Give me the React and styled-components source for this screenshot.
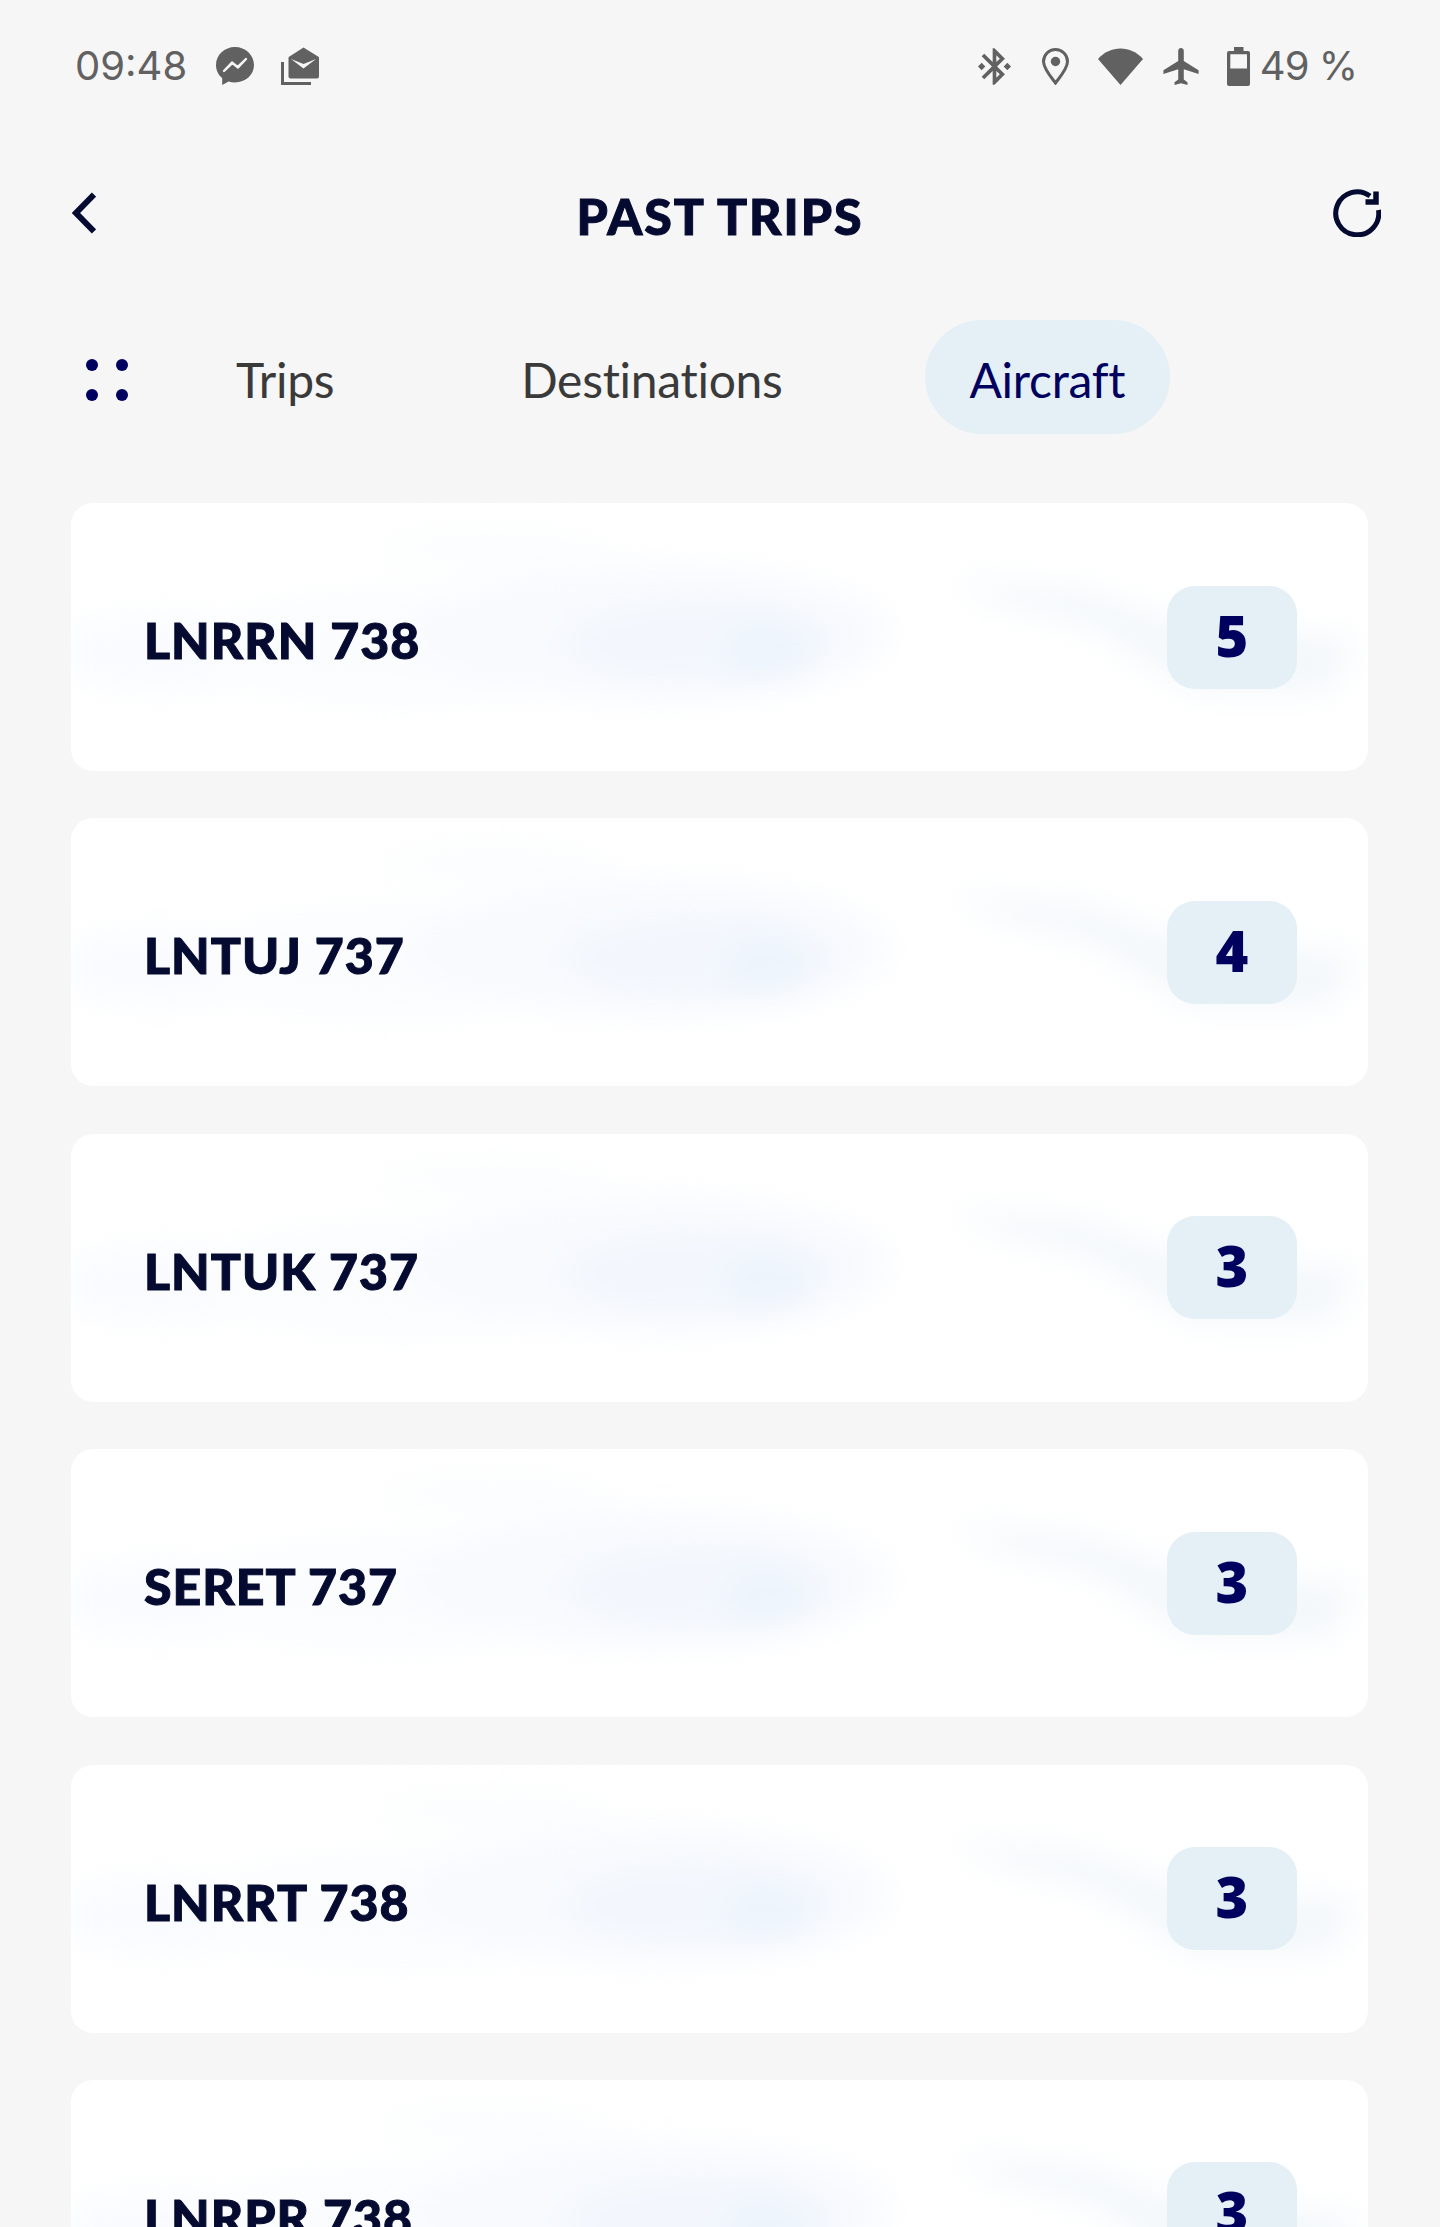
import React from 'react'
import styled, { createGlobalStyle } from 'styled-components'

const GlobalStyle = createGlobalStyle`
  html, body {
    margin: 0;
    padding: 0;
    background: #f6f6f6;
  }
`

const Page = styled.div`
  width: 1440px;
  height: 2227px;
  overflow: hidden;
  background: #f6f6f6;
  font-family: "Noto Sans", sans-serif;
`

const StatusBar = styled.div`
  height: 132px;
  padding: 0 83px 0 75px;
  display: flex;
  align-items: center;
  justify-content: space-between;
  color: #616161;
  box-sizing: border-box;
`

const StatusGroup = styled.div`
  display: flex;
  align-items: center;
`

const StatusText = styled.span`
  font-family: Inter, sans-serif;
  font-size: 40px;
  line-height: 48px;
  font-weight: 400;
  letter-spacing: ${p => p.$spacing || 0}px;
  margin-left: ${p => p.$left || 0}px;
  white-space: pre;
`

const StatusIcon = styled.svg`
  display: block;
  flex: none;
  margin-left: ${p => p.$left || 0}px;
  fill: #616161;
`

const Header = styled.header`
  height: 168px;
  padding: 0 59px 0 72px;
  display: flex;
  align-items: center;
  justify-content: space-between;
  position: relative;
  box-sizing: border-box;
`

const Title = styled.h1`
  position: absolute;
  left: 0;
  right: 0;
  top: 50%;
  transform: translateY(-50%);
  margin: 0;
  text-align: center;
  font-family: Lato, sans-serif;
  font-size: 50px;
  line-height: 60px;
  font-weight: 900;
  letter-spacing: 2px;
  -webkit-text-stroke: 1px #050a30;
  color: #050a30;
`

const HeaderIcon = styled.svg`
  display: block;
  margin-top: -6px;
  fill: none;
  stroke: #050a30;
`

const Tabs = styled.nav`
  margin-top: 20px;
  padding-left: 86px;
  display: flex;
  align-items: center;
  height: 114px;
`

const Dots = styled.div`
  display: grid;
  grid-template-columns: 12px 12px;
  gap: 18px;
  margin: 6px 63px 0 0;
  span {
    width: 12px;
    height: 12px;
    border-radius: 50%;
    background: #00005f;
  }
`

const Tab = styled.div`
  height: 114px;
  box-sizing: border-box;
  padding: 5px 45px 0;
  margin-right: 97px;
  border-radius: 57px;
  display: flex;
  align-items: center;
  font-family: Lato, sans-serif;
  font-size: 48px;
  letter-spacing: -0.3px;
  font-variant-ligatures: none;
  color: ${p => (p.$active ? '#00005f' : '#3a3a3a')};
  background: ${p => (p.$active ? '#e4eff6' : 'transparent')};
`

const CardList = styled.div`
  margin: 69px 72px 0 71px;
  display: flex;
  flex-direction: column;
  gap: 47.4px;
`

const Card = styled.div`
  position: relative;
  flex: none;
  height: 268px;
  padding: 0 71px 0 73px;
  border-radius: 22px;
  background: #fff;
  overflow: hidden;
  display: flex;
  align-items: center;
  justify-content: space-between;
`

const Cloud = styled.svg`
  position: absolute;
  inset: 0;
  filter: blur(16px);
`

const Registration = styled.span`
  position: relative;
  top: 3px;
  font-family: Lato, sans-serif;
  font-size: 50px;
  font-weight: 900;
  letter-spacing: 1px;
  -webkit-text-stroke: 1px #050a30;
  color: #050a30;
`

const CountBadge = styled.div`
  position: relative;
  width: 130px;
  height: 103px;
  box-sizing: border-box;
  padding-bottom: 5px;
  border-radius: 28px;
  background: #e4eff6;
  color: #00005f;
  display: flex;
  align-items: center;
  justify-content: center;
  font-family: "Open Sans", sans-serif;
  font-size: 56px;
  font-weight: 800;
`

const aircraft = [
  { name: 'LNRRN 738', count: 5 },
  { name: 'LNTUJ 737', count: 4 },
  { name: 'LNTUK 737', count: 3 },
  { name: 'SERET 737', count: 3 },
  { name: 'LNRRT 738', count: 3 },
  { name: 'LNRPR 738', count: 3 }
]

function CardCloud() {
  return (
    <Cloud width="1297" height="268" viewBox="0 0 1297 268">
      <ellipse cx="420" cy="45" rx="120" ry="22" fill="#fcfdfe" />
      <ellipse cx="90" cy="150" rx="120" ry="38" fill="#f9fbfe" />
      <ellipse cx="330" cy="145" rx="200" ry="55" fill="#fafcfe" />
      <ellipse cx="580" cy="130" rx="240" ry="68" fill="#f8fafe" />
      <ellipse cx="630" cy="140" rx="140" ry="44" fill="#f3f7fd" />
      <ellipse cx="695" cy="148" rx="42" ry="28" fill="#edf4fc" />
      <path d="M880 75 L1010 85 L1110 120 L1290 135 L1260 190 L1120 190 L1020 125 L920 100 Z" fill="#f4f8fb" />
    </Cloud>
  )
}

export default function App() {
  return (
    <Page>
      <GlobalStyle />
      <StatusBar>
        <StatusGroup>
          <StatusText>09:48</StatusText>
          <StatusIcon $left={29} width="38" height="38" viewBox="0 0 38 38">
            <path d="M19 0C8.5 0 0 7.9 0 18c0 5.3 2.3 9.9 6.2 13.1V38l6.4-3.5c2 .6 4.100.9 6.400.9 10.500 0 19-7.500 19-17.400S29.500 0 19 0z" />
            <path d="M8 24l8-8.500 5.500 4.500 8.500-8-8 8.500-5.500-4.500z" stroke="#f6f6f6" strokeWidth="2.4" strokeLinejoin="round" />
          </StatusIcon>
          <StatusIcon $left={27} width="39" height="38" viewBox="0 0 39 38">
            <path d="M22.500.5L37 9.500a1.500 1.500 0 0 1 1 1.500v18.500a2 2 0 0 1-2 2H9.500a2 2 0 0 1-2-2V11a1.500 1.500 0 0 1 1-1.500z" />
            <path d="M10 12l12.500 5L35 12l-12.500 9.500z" fill="#f6f6f6" />
            <path d="M1.500 15v21.500H30" fill="none" stroke="#616161" strokeWidth="3" />
          </StatusIcon>
        </StatusGroup>
        <StatusGroup>
          <StatusIcon width="33" height="37" viewBox="3 2 18 20">
            <path d="M7 12l-2-2-2 2 2 2 2-2zm10.710-4.290L12 2h-1v7.590L6.410 5 5 6.410 10.590 12 5 17.590 6.410 19 11 14.410V22h1l5.710-5.710-4.300-4.290 4.300-4.290zM13 5.830l1.880 1.880L13 9.590V5.830zm1.880 10.460L13 18.170v-3.760l1.880 1.880zM19 10l-2 2 2 2 2-2-2-2z" />
          </StatusIcon>
          <StatusIcon $left={31} width="27" height="37" viewBox="0 0 27 37">
            <path d="M13.500 35C9 29 1.500 20.500 1.500 13.500a12 12 0 0 1 24 0C25.500 20.500 18 29 13.500 35z" fill="none" stroke="#616161" strokeWidth="3" />
            <circle cx="13.500" cy="13.500" r="4.700" />
          </StatusIcon>
          <StatusIcon $left={29} width="45" height="37" viewBox="0 0 45 37">
            <path d="M0 11C12-3 33-3 45 11L22.500 37z" />
          </StatusIcon>
          <StatusIcon $left={20} width="36" height="37" viewBox="2 2 19 20">
            <path d="M21 16v-2l-8-5V3.500c0-.83-.67-1.500-1.500-1.500S10 2.670 10 3.500V9l-8 5v2l8-2.500V19l-2 1.500V22l3.500-1 3.500 1v-1.500L13 19v-5.500l8 2.500z" />
          </StatusIcon>
          <StatusIcon $left={28} width="23" height="39" viewBox="0 0 23 39">
            <path fillRule="evenodd" d="M7 0h9.500v4H21a2 2 0 0 1 2 2v31a2 2 0 0 1-2 2H2a2 2 0 0 1-2-2V6a2 2 0 0 1 2-2h5zM3.300 7.300v14.300h16.700V7.300z" />
          </StatusIcon>
          <StatusText $left={10} $spacing={-1}>49 %</StatusText>
        </StatusGroup>
      </StatusBar>

      <Header>
        <HeaderIcon width="24" height="42" viewBox="0 0 24 42" strokeWidth="6">
          <path d="M22 2.500L4 21l18 18.500" />
        </HeaderIcon>
        <Title>PAST TRIPS</Title>
        <HeaderIcon width="48" height="48" viewBox="0 0 48 48" strokeWidth="5">
          <path d="M45.500 21A21.500 21.500 0 1 1 37 7" />
          <path d="M43 2.500V13H32.500" strokeWidth="5.500" />
        </HeaderIcon>
      </Header>

      <Tabs>
        <Dots>
          <span />
          <span />
          <span />
          <span />
        </Dots>
        <Tab>Trips</Tab>
        <Tab>Destinations</Tab>
        <Tab $active>Aircraft</Tab>
      </Tabs>

      <CardList>
        {aircraft.map(a => (
          <Card key={a.name}>
            <CardCloud />
            <Registration>{a.name}</Registration>
            <CountBadge>{a.count}</CountBadge>
          </Card>
        ))}
      </CardList>
    </Page>
  )
}
